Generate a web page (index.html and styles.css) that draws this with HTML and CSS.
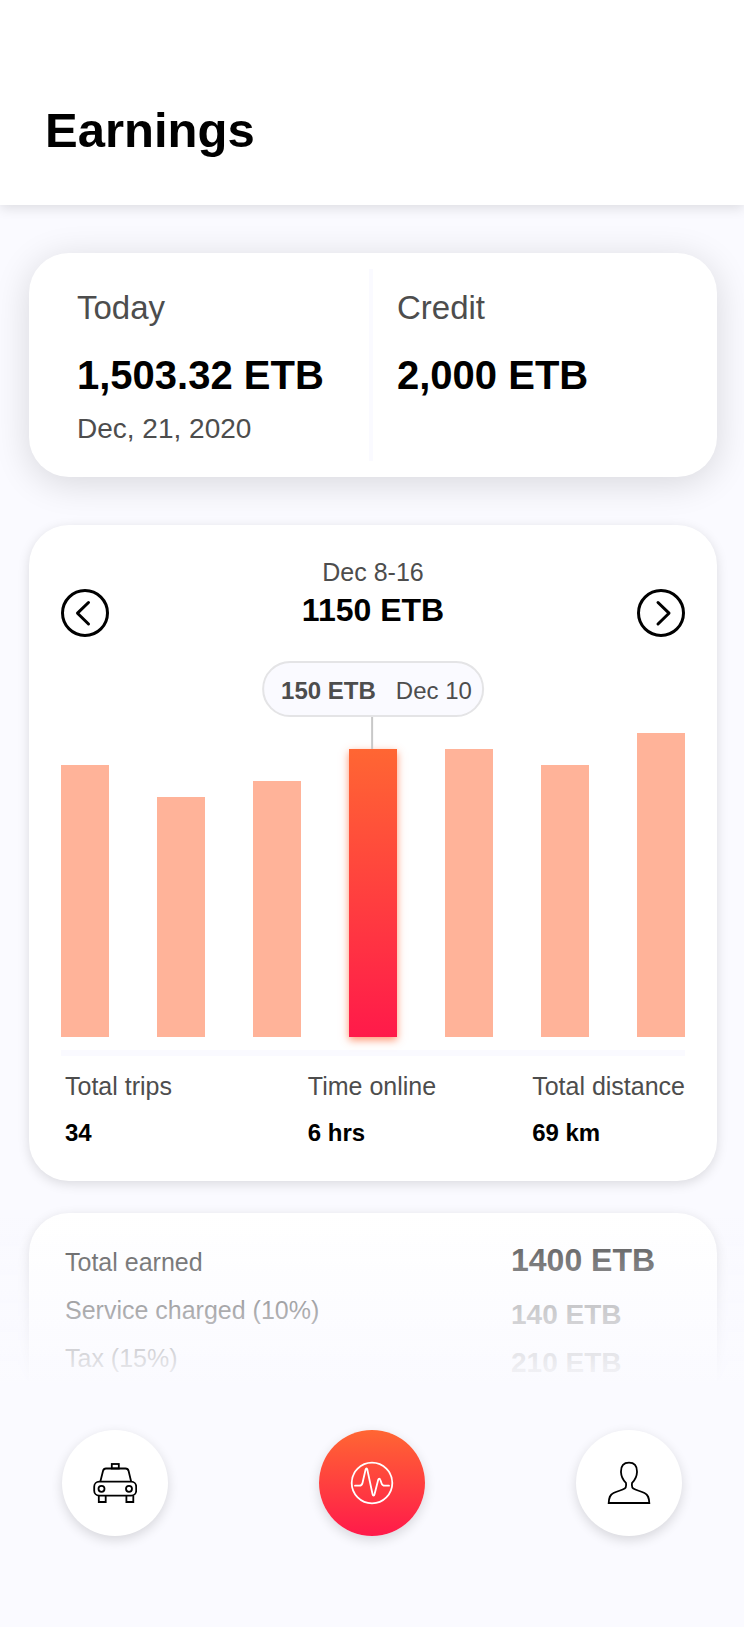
FILE: index.html
```html
<!DOCTYPE html>
<html lang="en">
  <head>
    <meta charset="utf-8">
    <meta name="viewport" content="width=device-width, initial-scale=1">
    <title>Earnings</title>
    <link rel="stylesheet" href="styles.css">
  </head>
  <body>
    <header class="page-header">
      <h1>Earnings</h1>
    </header>

    <main>
      <section class="card summary">
        <div class="summary-item">
          <h2>Today</h2>
          <p class="amount">1,503.32 ETB</p>
          <p class="date">Dec, 21, 2020</p>
        </div>
        <div class="summary-item">
          <h2>Credit</h2>
          <p class="amount">2,000 ETB</p>
        </div>
      </section>

      <section class="card week">
        <div class="week-header">
          <button type="button" class="arrow" aria-label="Previous week">
            <svg viewBox="0 0 48 48"><circle cx="24" cy="24" r="22.5"/><path d="M27.500 13.500L16.500 24.200L27.500 35"/></svg>
          </button>
          <div class="week-title">
            <p class="range">Dec 8-16</p>
            <p class="total">1150 ETB</p>
          </div>
          <button type="button" class="arrow" aria-label="Next week">
            <svg viewBox="0 0 48 48"><circle cx="24" cy="24" r="22.5"/><path d="M21 13.500L32 24.200L21 35"/></svg>
          </button>
        </div>

        <div class="chart">
          <div class="bar" style="height: 272px"></div>
          <div class="bar" style="height: 240px"></div>
          <div class="bar" style="height: 256px"></div>
          <div class="bar active" style="height: 288px">
            <div class="tooltip"><b>150 ETB</b><span>Dec 10</span></div>
          </div>
          <div class="bar" style="height: 288px"></div>
          <div class="bar" style="height: 272px"></div>
          <div class="bar" style="height: 304px"></div>
        </div>

        <div class="stats">
          <div>
            <p class="label">Total trips</p>
            <p class="value">34</p>
          </div>
          <div>
            <p class="label">Time online</p>
            <p class="value">6 hrs</p>
          </div>
          <div>
            <p class="label">Total distance</p>
            <p class="value">69 km</p>
          </div>
        </div>
      </section>

      <section class="card">
        <dl class="breakdown">
          <dt>Total earned</dt>
          <dd class="earned">1400 ETB</dd>
          <dt>Service charged (10%)</dt>
          <dd>140 ETB</dd>
          <dt>Tax (15%)</dt>
          <dd>210 ETB</dd>
        </dl>
      </section>
    </main>

    <nav class="tabs">
      <a href="#rides" class="tab" aria-label="Rides">
        <svg viewBox="0 0 44 40">
          <rect x="18.800" y="1" width="7" height="4.500"/>
          <path d="M7.300 18.700L10 8Q10.600 5.500 13 5.500H32.500Q35 5.500 35.600 8L38.200 18.700"/>
          <rect x="1.200" y="18.700" width="42" height="14" rx="5"/>
          <circle cx="8.500" cy="25.800" r="3"/>
          <circle cx="36" cy="25.800" r="3"/>
          <path d="M5.800 32.700V39H12.700V32.700M33.400 32.700V39H40.300V32.700"/>
        </svg>
      </a>
      <a href="#earnings" class="tab current" aria-label="Earnings" aria-current="page">
        <svg viewBox="0 0 44 44">
          <circle cx="22" cy="22" r="20.300"/>
          <path d="M5 24.700H9.500C11.500 24.700 12 24 12.500 22L15.600 8.500C16 7 17 7 17.300 8.500L22.500 33C22.900 35 24.200 35 24.600 33L28.200 18.800C28.700 17.200 29.800 17.200 30.300 18.800L31.600 22.500C32.200 24.200 33 24.700 34.700 24.700H39"/>
        </svg>
      </a>
      <a href="#profile" class="tab" aria-label="Profile">
        <svg viewBox="0 0 44 44">
          <path d="M1.700 42C2 36.500 2.800 33.800 6.500 32C10.500 30 15 29.300 17.700 27.600C19.400 26.300 19.300 24 18.900 21.800C15.500 18.500 14 15 14 10.500C14 4.800 17 1.700 22 1.700C27 1.700 30 4.800 30 10.500C30 15 28.500 18.500 25.100 21.800C24.700 24 24.600 26.300 26.300 27.600C29 29.300 33.500 30 37.500 32C41.200 33.800 42 36.500 42.300 42Z"/>
        </svg>
      </a>
    </nav>
  </body>
</html>
```

FILE: styles.css
```css
* { box-sizing: border-box; }
body
{
  margin: 0;
  padding-bottom: 200px;
  background-color: #fafaff;
  color: #000;
  font-family: "Liberation Sans", Arial, sans-serif;
  font-size: 24px;
}
h1, h2, p, dl, dd { margin: 0; }

.page-header
{
  padding: 100px 45px 45px;
  background-color: #fff;
  box-shadow: 0 3px 12px rgba(0, 0, 0, 0.12);
}
.page-header h1 { font-size: 49px; line-height: 60px; }

main
{
  display: flex;
  flex-direction: column;
  padding: 48px 27px 0 29px;
}
.card
{
  margin-bottom: 32px;
  background-color: #fff;
  border-radius: 40px;
  box-shadow: 0 3px 12px rgba(0, 0, 0, 0.13);
}

/* today / credit */
.summary
{
  display: grid;
  grid-template-columns: 1fr 1fr;
  margin-bottom: 48px;
  padding: 16px 0;
  box-shadow: 0 6px 36px rgba(0, 0, 0, 0.14);
}
.summary-item { padding: 19px 0 14px 24px; }
.summary-item:first-child
{
  padding-left: 48px;
  border-right: 4px solid #fafaff;
}
.summary h2
{
  color: #4d4d4d;
  font-size: 33px;
  font-weight: normal;
  line-height: 40px;
}
.summary .amount
{
  margin-top: 23px;
  font-size: 40px;
  font-weight: bold;
  line-height: 48px;
}
.summary .date
{
  margin-top: 12px;
  color: #4d4d4d;
  font-size: 28px;
  line-height: 36px;
}

/* weekly chart */
.week { padding: 32px 32px 33px; }
.week-header
{
  display: flex;
  justify-content: space-between;
  align-items: flex-end;
}
.arrow
{
  width: 48px;
  height: 48px;
  padding: 0;
  border: 0;
  background: none;
  cursor: pointer;
}
.arrow svg
{
  display: block;
  fill: none;
  stroke: #000;
  stroke-width: 3;
  stroke-linecap: round;
  stroke-linejoin: round;
}
.week-title { padding-bottom: 7px; text-align: center; }
.range { color: #4d4d4d; font-size: 25px; line-height: 30px; }
.total
{
  margin-top: 3px;
  font-size: 32px;
  font-weight: bold;
  line-height: 40px;
}
.chart
{
  display: flex;
  justify-content: space-between;
  align-items: flex-end;
  margin-top: 96px;
}
.bar { width: 48px; background-color: #ffb399; }
.bar.active
{
  position: relative;
  background: linear-gradient(#ff6633, #ff1a4a);
  box-shadow: 0 3px 8px rgba(255, 102, 51, 0.7);
}
.tooltip
{
  position: absolute;
  bottom: calc(100% + 32px);
  left: 50%;
  display: flex;
  gap: 20px;
  padding: 3px 10px 0 17px;
  border: 2px solid #e4e4e6;
  border-radius: 28px;
  background-color: #fafaff;
  color: #4d4d4d;
  line-height: 49px;
  white-space: nowrap;
  transform: translateX(-50%);
}
.tooltip::after
{
  content: "";
  position: absolute;
  top: calc(100% + 2px);
  left: 50%;
  width: 2px;
  height: 32px;
  margin-left: -2px;
  background-color: #c8c8c8;
}
.stats
{
  display: grid;
  grid-template-columns: 1fr auto auto;
  column-gap: 96px;
  margin-top: 13px;
  padding: 15px 0 0 4px;
  border-top: 6px solid #fafaff;
}
.label { color: #4d4d4d; font-size: 25px; line-height: 30px; }
.value { margin-top: 17px; font-weight: bold; line-height: 30px; }

/* totals, running under the tab bar */
.breakdown
{
  display: grid;
  grid-template-columns: 1fr 174px;
  grid-auto-rows: 48px;
  padding: 25px 32px 43px 36px;
  color: #4d4d4d;
}
.breakdown dt { font-size: 25px; line-height: 48px; }
.breakdown dd
{
  padding-top: 5px;
  color: #949494;
  font-size: 28px;
  font-weight: bold;
  line-height: 48px;
}
.breakdown .earned
{
  padding-top: 0;
  color: #4d4d4d;
  font-size: 32px;
  line-height: 44px;
}

.tabs
{
  position: fixed;
  right: 0;
  bottom: 0;
  left: 0;
  display: flex;
  justify-content: space-between;
  padding: 48px 62px 91px;
  background-color: #fafaff;
}
.tabs::before
{
  content: "";
  position: absolute;
  right: 0;
  bottom: 100%;
  left: 0;
  height: 164px;
  background: linear-gradient(rgba(250, 250, 255, 0), rgba(250, 250, 255, 0.96));
  pointer-events: none;
}
.tab
{
  display: flex;
  justify-content: center;
  align-items: center;
  width: 106px;
  height: 106px;
  border-radius: 50%;
  background-color: #fff;
  box-shadow: 0 4px 12px rgba(0, 0, 0, 0.14);
}
.tab svg
{
  width: 44px;
  fill: none;
  stroke: #000;
  stroke-width: 1.8;
}
.tab.current { background: linear-gradient(#ff6633, #ff1a4a); }
.tab.current svg { stroke: #fff; stroke-linecap: round; }
```
